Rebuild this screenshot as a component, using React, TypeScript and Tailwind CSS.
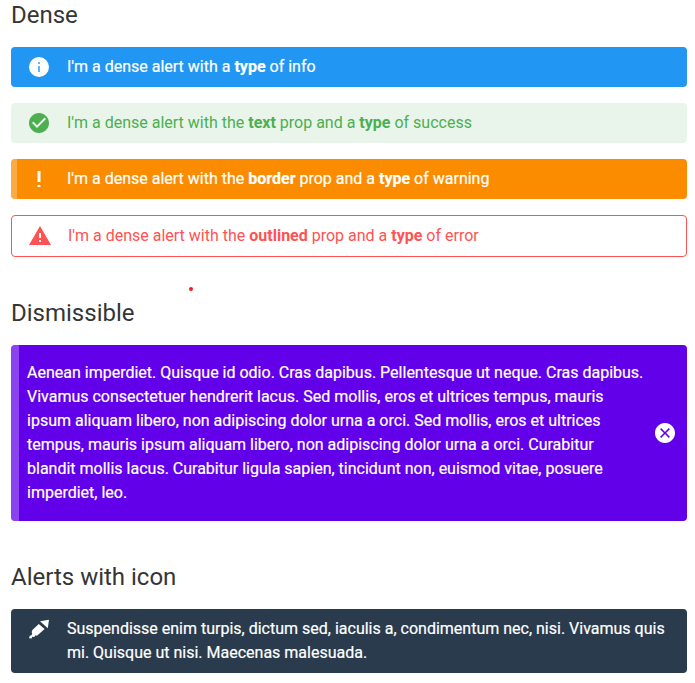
import type { ReactNode } from 'react';

const INFO = 'M13,9H11V7H13M13,17H11V11H13M12,2A10,10 0 0,0 2,12A10,10 0 0,0 12,22A10,10 0 0,0 22,12A10,10 0 0,0 12,2Z';
const CHECK = 'M12 2C6.5 2 2 6.5 2 12S6.5 22 12 22 22 17.5 22 12 17.5 2 12 2M10 17L5 12L6.41 10.59L10 14.17L17.59 6.58L19 8L10 17Z';
const EXCLAMATION = 'M10.5,4H13.5V15H10.5V4M10.5,18V20H13.5V18H10.5Z';
const WARNING = 'M13 14H11V9H13M13 18H11V16H13M1 21H23L12 2L1 21Z';
const CLOSE = 'M12,2C17.53,2 22,6.47 22,12C22,17.53 17.53,22 12,22C6.47,22 2,17.53 2,12C2,6.47 6.47,2 12,2M15.8,7.1L12,10.9L8.2,7.1L7.1,8.2L10.9,12L7.1,15.8L8.2,16.9L12,13.1L15.8,16.9L16.9,15.8L13.1,12L16.9,8.2L15.8,7.1Z';
const FIREWORK = 'M13 4.3L22 2.8L20.8 11.2ZM11.8 6.9L17.6 11.9L10 18.7L8.6 18.2L7.2 20L5.2 19.8L4.6 21.4L2 21.2L2.8 18.7L4.6 18.2L5.2 16.2L4.6 15.3L5.4 13Z';

function Icon({ path, className = '' }: { path: string; className?: string }) {
  return (
    <svg viewBox="0 0 24 24" className={'size-6 shrink-0 fill-current ' + className} aria-hidden="true">
      <path d={path} fillRule="evenodd" />
    </svg>
  );
}

function Heading({ children }: { children: ReactNode }) {
  return <h2 className="text-2xl leading-8 font-normal text-[#353535]">{children}</h2>;
}

function Alert({ icon, className, children }: { icon: string; className: string; children: ReactNode }) {
  return (
    <div className={'flex rounded px-4 py-2 ' + className}>
      <Icon path={icon} className={icon === INFO ? 'mr-4 rounded-full bg-[radial-gradient(circle,#64b5f6_50%,transparent_51%)]' : 'mr-4'} />
      <div className="flex-1">{children}</div>
    </div>
  );
}

export default function App() {
  return (
    <main className="relative h-[683px] overflow-hidden bg-white pr-2 pl-[11px] font-['Roboto',sans-serif] text-base leading-6">
      <section className="-mt-px">
        <Heading>Dense</Heading>
        <div className="mt-4 flex flex-col gap-4">
          <Alert icon={INFO} className="bg-[#2196f3] text-white [-webkit-text-stroke:0.2px]">
            I'm a dense alert with a <strong>type</strong> of info
          </Alert>
          <Alert icon={CHECK} className="bg-[#e9f5ea] text-[#4caf50]">
            I'm a dense alert with the <strong>text</strong> prop and a <strong>type</strong> of success
          </Alert>
          <div className="flex overflow-hidden rounded bg-[#fb8c00] text-white [-webkit-text-stroke:0.2px]">
            <div className="w-1.5 bg-white/26" />
            <Alert icon={EXCLAMATION} className="-ml-1.5 flex-1">
              I'm a dense alert with the <strong>border</strong> prop and a <strong>type</strong> of warning
            </Alert>
          </div>
          <Alert icon={WARNING} className="border border-[#ff5252] text-[#ff5252]">
            I'm a dense alert with the <strong>outlined</strong> prop and a <strong>type</strong> of error
          </Alert>
        </div>
      </section>
      <section className="mt-10">
        <Heading>Dismissible</Heading>
        <div className="mt-4 flex items-center overflow-hidden rounded bg-[#6200ea] pr-2.5 text-white [-webkit-text-stroke:0.2px]">
          <div className="w-2 self-stretch bg-white/26" />
          <p className="w-[626px] py-4 pl-2">
            Aenean imperdiet. Quisque id odio. Cras dapibus. Pellentesque ut neque. Cras dapibus.
            Vivamus consectetuer hendrerit lacus. Sed mollis, eros et ultrices tempus, mauris ipsum
            aliquam libero, non adipiscing dolor urna a orci. Sed mollis, eros et ultrices tempus,
            mauris ipsum aliquam libero, non adipiscing dolor urna a orci. Curabitur blandit mollis
            lacus. Curabitur ligula sapien, tincidunt non, euismod vitae, posuere imperdiet, leo.
          </p>
          <button className="ml-auto" aria-label="Close">
            <Icon path={CLOSE} />
          </button>
        </div>
      </section>
      <section className="mt-10">
        <Heading>Alerts with icon</Heading>
        <div className="mt-4">
          <Alert icon={FIREWORK} className="bg-[#2a3b4d] text-white [-webkit-text-stroke:0.2px]">
            Suspendisse enim turpis, dictum sed, iaculis a, condimentum nec, nisi. Vivamus quis mi.
            Quisque ut nisi. Maecenas malesuada.
          </Alert>
        </div>
      </section>
      <span className="absolute top-[287px] left-[189px] size-1 rounded-full bg-[#ed1c24]" />
    </main>
  );
}
